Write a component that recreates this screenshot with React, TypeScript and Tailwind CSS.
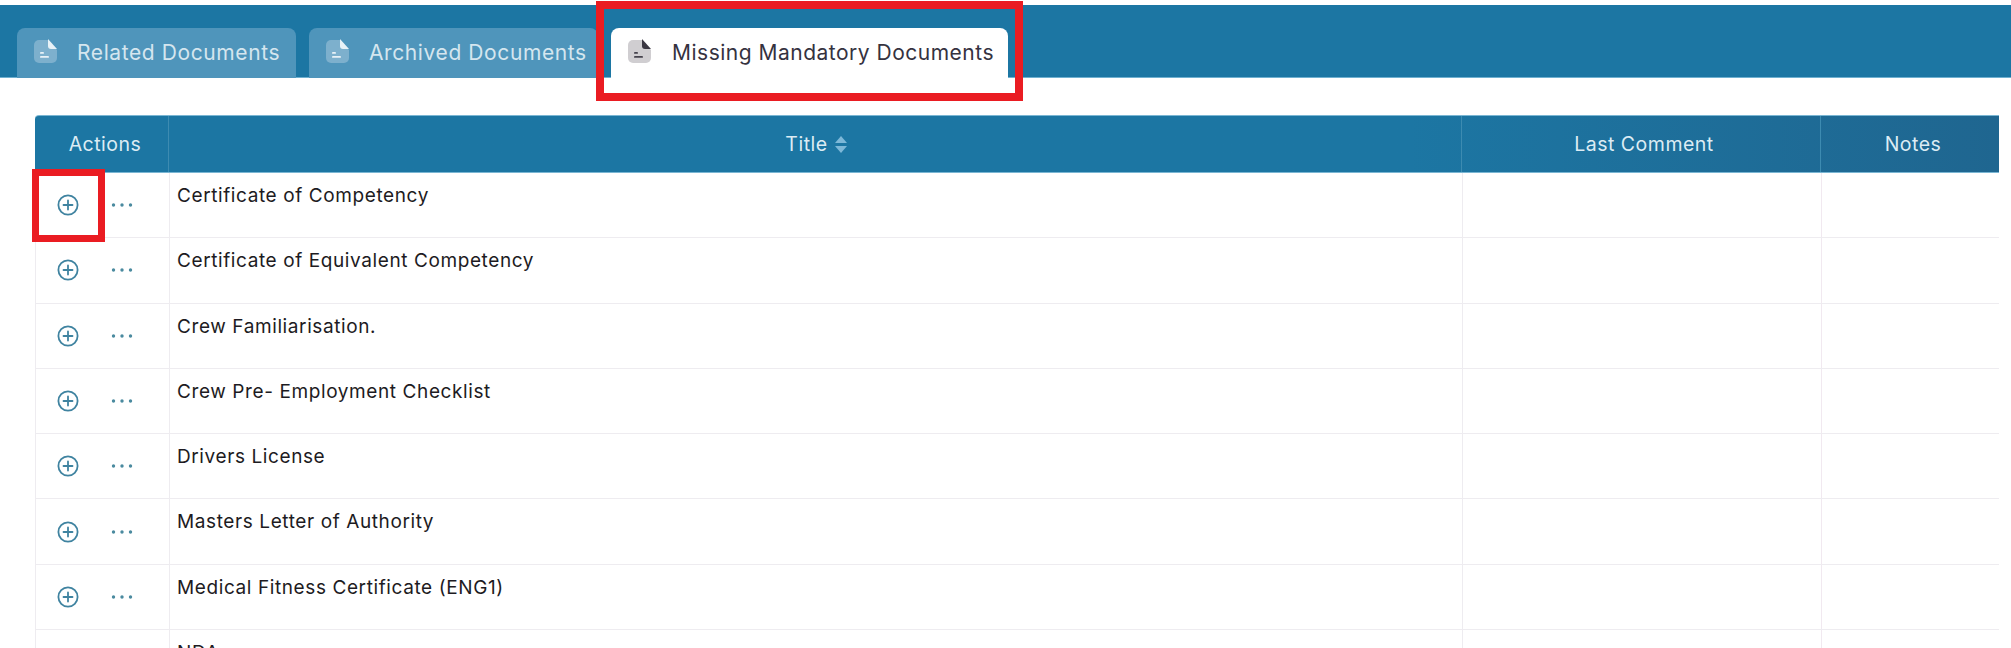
const font = { fontFamily: 'Inter, "Liberation Sans", sans-serif' };

const rows = [
  'Certificate of Competency',
  'Certificate of Equivalent Competency',
  'Crew Familiarisation.',
  'Crew Pre- Employment Checklist',
  'Drivers License',
  'Masters Letter of Authority',
  'Medical Fitness Certificate (ENG1)',
  'NDA',
];

function DocIcon({ active }: { active?: boolean }) {
  const body = active ? '#d0ced1' : '#7db0cd';
  const corner = active ? '#3a3742' : '#e8f2f7';
  const line = active ? '#45424c' : '#e8f2f7';
  return (
    <svg width="25" height="25" viewBox="0 0 25 25" className="shrink-0">
      <path d="M6 1h9l9 10v8a5 5 0 0 1-5 5H6a5 5 0 0 1-5-5V6a5 5 0 0 1 5-5z" fill={body} />
      <path d="M15 0l9 10h-6a3 3 0 0 1-3-3z" fill={corner} />
      <rect x="7" y="13" width="4" height="1.8" rx="0.9" fill={line} />
      <rect x="7" y="17" width="9" height="1.8" rx="0.9" fill={line} />
    </svg>
  );
}

function Tab({ label, width, active }: { label: string; width: string; active?: boolean }) {
  return (
    <div
      className={`${width} h-[50px] flex items-start pt-[11px] rounded-t-[8px] text-[21px] ${
        active
          ? 'bg-white text-[#35323f] pl-[16px] gap-[20px] tracking-[0.5px]'
          : 'bg-[#4f95bb] text-[#d5e6ef] pl-[16px] gap-[19px] tracking-[0.6px]'
      }`}
    >
      <DocIcon active={active} />
      <span className="leading-[28px] whitespace-nowrap">{label}</span>
    </div>
  );
}

function PlusIcon() {
  return (
    <svg width="22" height="22" viewBox="0 0 22 22" fill="none" stroke="#3f83a0" strokeWidth="1.8">
      <circle cx="11" cy="11" r="9.6" />
      <path d="M11 6.5v9M6.5 11h9" strokeLinecap="round" />
    </svg>
  );
}

function Dots() {
  return (
    <svg width="22" height="6" viewBox="0 0 22 6" fill="#4a8a9f">
      <circle cx="2.5" cy="3" r="1.7" />
      <circle cx="11" cy="3" r="1.7" />
      <circle cx="19.5" cy="3" r="1.7" />
    </svg>
  );
}

function SortIcon() {
  return (
    <svg width="12" height="17" viewBox="0 0 12 17" fill="#7db8d8">
      <path d="M6 0l6 7H0z" />
      <path d="M6 17l6-7H0z" />
    </svg>
  );
}

export default function App() {
  return (
    <div className="relative w-[2011px] h-[648px] overflow-hidden bg-white" style={font}>
      <div className="mt-[5px] h-[73px] pt-[23px] pl-[17px] flex gap-[13px] bg-[#1c76a3] border-b border-[#6fb0d0]">
        <Tab label="Related Documents" width="w-[279px]" />
        <Tab label="Archived Documents" width="w-[289px]" />
        <Tab label="Missing Mandatory Documents" width="w-[397px]" active />
      </div>

      <div className="mt-[37px] ml-[35px] w-[1964px]">
        <div className="grid grid-cols-[134px_1293px_359px_178px] h-[58px] text-[19.5px] tracking-[0.5px] text-[#dcecf4] bg-gradient-to-r from-[#1c76a3] from-70% to-[#1f6690] border-y border-[#7ab6d3] rounded-tl-[4px]">
          <div className="flex items-center justify-center pl-[7px] pt-[1px] border-r border-[#3d8bb1]">Actions</div>
          <div className="flex items-center justify-center gap-[7px] pl-[2px] pt-[1px] border-r border-[#3d8bb1]">
            Title
            <SortIcon />
          </div>
          <div className="flex items-center justify-center pl-[6px] pt-[1px] border-r border-[#3d8bb1]">Last Comment</div>
          <div className="flex items-center justify-center pl-[6px] pt-[1px]">Notes</div>
        </div>

        {rows.map(title => (
          <div
            key={title}
            className="grid grid-cols-[134px_1293px_359px_178px] h-[65.3px] border-l border-b border-[#eeecf0] text-[19px] tracking-[0.6px] text-[#1d1b22]"
          >
            <div className="flex items-center gap-[32px] pl-[21px] border-r border-[#eeecf0]">
              <PlusIcon />
              <Dots />
            </div>
            <div className="pl-[7px] pt-[10px] leading-[26px] border-r border-[#eeecf0]">{title}</div>
            <div className="border-r border-[#f1e9f0]" />
            <div />
          </div>
        ))}
      </div>

      {/* red annotation boxes */}
      <div className="absolute left-[596px] top-[1px] w-[427px] h-[100px] border-[8px] border-[#ea1c22]" />
      <div className="absolute left-[32px] top-[169px] w-[73px] h-[73px] border-[7px] border-[#ea1c22]" />
    </div>
  );
}
